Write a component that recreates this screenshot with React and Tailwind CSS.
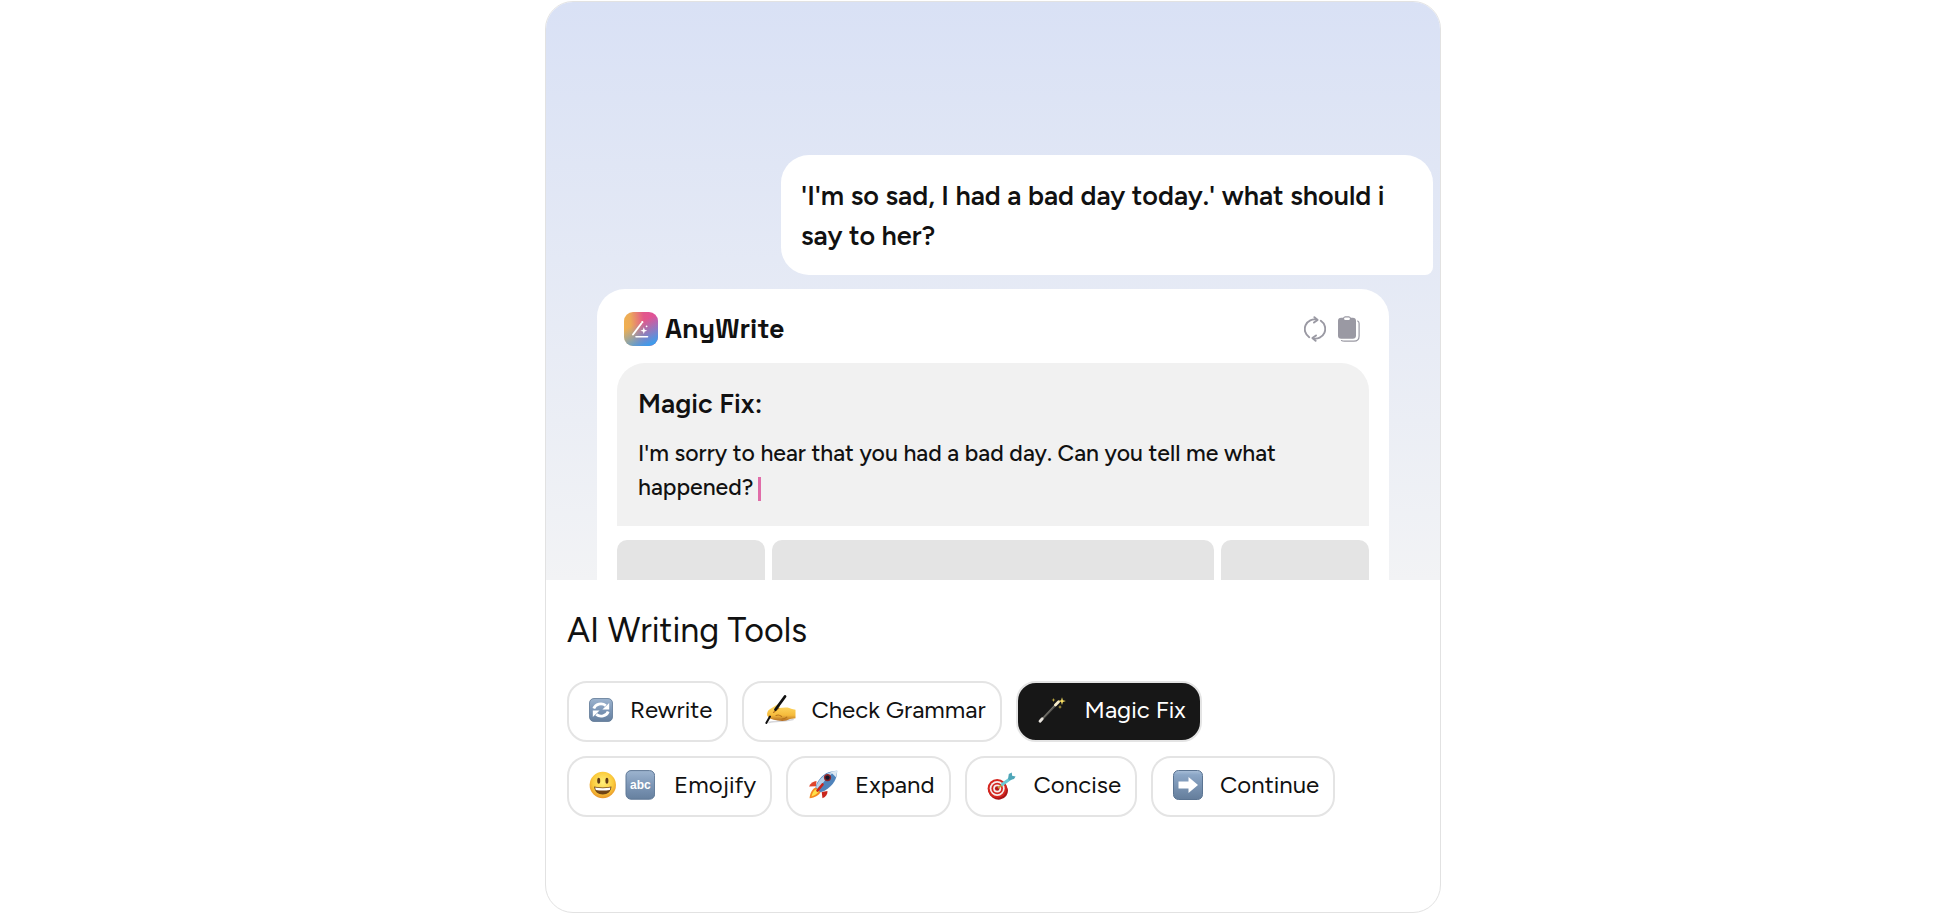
import React, { useState } from 'react';

const RewriteIcon = () => (
    <svg viewBox="0 0 24 24" className="w-6 h-6" aria-hidden="true">
        <defs>
            <linearGradient id="rewriteBg" x1="0" y1="0" x2="0" y2="1">
                <stop offset="0" stopColor="#9db4cf" />
                <stop offset="0.5" stopColor="#7d97b7" />
                <stop offset="1" stopColor="#66809f" />
            </linearGradient>
        </defs>
        <rect x="0.5" y="0.5" width="23" height="23" rx="4.5" fill="url(#rewriteBg)" stroke="#5f7896" strokeWidth="0.8" />
        <path d="M4.800 10.500A7.300 6.300 0 0 1 16.800 7.600" fill="none" stroke="#fff" strokeWidth="2.800" />
        <path d="M19.200 13.500A7.300 6.300 0 0 1 7.200 16.400" fill="none" stroke="#fff" strokeWidth="2.800" />
        <path d="M20.200 5v6.400h-6.800z" fill="#fff" />
        <path d="M3.800 19v-6.400h6.800z" fill="#fff" />
    </svg>
);

const WritingHandIcon = () => (
    <svg viewBox="0 0 32 32" className="w-8 h-8 shrink-0" aria-hidden="true">
        <defs>
            <linearGradient id="handSkin" x1="0" y1="0" x2="0" y2="1">
                <stop offset="0" stopColor="#ffdc66" />
                <stop offset="0.65" stopColor="#f5bb3c" />
                <stop offset="1" stopColor="#b06a22" />
            </linearGradient>
        </defs>
        <path d="M5 28.500c7-2 15-.5 24-3" stroke="#d6d6da" strokeWidth="1.600" fill="none" strokeLinecap="round" />
        <path d="M3.200 21.500c-.4-2.800.6-5 2.600-6.200L12.500 11c1.700-1 3.200-.4 3.500.6.300.9-.3 1.700-1.200 2.400l6.700-.6c2.500-.1 4.500.6 6.500 1.600l3.500.8v8.400l-5.500.9c-3.600 2-8 2.300-12 1.400-3.400-.4-8.700-1-10.800-5z" fill="url(#handSkin)" />
        <path d="M9.500 18.500l5.300-4.500M12 21.500c2-1 4-.4 5.500.9M18 25c2 0 3.600-.6 4.800-1.800" stroke="#b8741c" strokeWidth="1.100" fill="none" strokeLinecap="round" />
        <path d="M21 2.500L11.500 15.500" stroke="#111" strokeWidth="2.800" strokeLinecap="round" />
        <path d="M6 22.500L2.300 29" stroke="#111" strokeWidth="2" strokeLinecap="round" />
    </svg>
);

const WandIcon = () => (
    <svg viewBox="0 0 28 28" className="w-7 h-7" aria-hidden="true">
        <path d="M2.500 25L18 8.500" stroke="#55544f" strokeWidth="2.400" strokeLinecap="round" />
        <path d="M4 23L17 9" stroke="#85827a" strokeWidth="0.800" />
        <path d="M2 25.200L4.200 22.800" stroke="#e8e4de" strokeWidth="2.800" strokeLinecap="round" />
        <path d="M17.400 9L20.600 5.800" stroke="#f7ecc9" strokeWidth="2.800" strokeLinecap="round" />
        <path d="M24 1.200l.9 3 3 .9-3 .9-.9 3-.9-3-3-.9 3-.9z" fill="#f6dd63" />
        <path d="M15.500 2l.6 1.400 1.400.6-1.400.6-.6 1.400-.6-1.400-1.400-.6 1.400-.6z" fill="#b8a33f" />
        <path d="M22 9l.6 1.400 1.400.6-1.400.6-.6 1.400-.6-1.400-1.400-.6 1.400-.6z" fill="#b8a33f" />
    </svg>
);

const EmojifyIcon = () => (
    <svg viewBox="0 0 66 30" className="w-[66px] h-[30px]" aria-hidden="true">
        <defs>
            <radialGradient id="faceBg" cx="0.5" cy="0.4" r="0.6">
                <stop offset="0" stopColor="#fff07a" />
                <stop offset="0.65" stopColor="#fbcb3c" />
                <stop offset="1" stopColor="#e8962a" />
            </radialGradient>
            <linearGradient id="abcBg" x1="0" y1="0" x2="0" y2="1">
                <stop offset="0" stopColor="#9db4cf" />
                <stop offset="0.5" stopColor="#7d97b7" />
                <stop offset="1" stopColor="#66809f" />
            </linearGradient>
        </defs>
        <circle cx="13.800" cy="15" r="13.200" fill="url(#faceBg)" />
        <ellipse cx="9.700" cy="10.800" rx="1.500" ry="3" fill="#5f3a14" />
        <ellipse cx="17.900" cy="10.800" rx="1.500" ry="3" fill="#5f3a14" />
        <path d="M5.100 16.500c5.500 1.400 11.900 1.400 17.400 0-.4 5-3.800 8-8.700 8s-8.300-3-8.700-8z" fill="#6f4416" />
        <path d="M6.100 17.500c5 1.100 10.400 1.100 15.400 0l-.7 2.400c-4.300.9-9.700.9-14 0z" fill="#fff" />
        <rect x="37" y="0.600" width="28.600" height="28.600" rx="5" fill="url(#abcBg)" stroke="#5f7896" strokeWidth="1" />
        <text x="51.300" y="18.500" textAnchor="middle" fontSize="12" fontWeight="700" fill="#fff" fontFamily="Liberation Sans, sans-serif">abc</text>
    </svg>
);

const RocketIcon = () => (
    <svg viewBox="0 0 30 30" className="w-[30px] h-[30px]" aria-hidden="true">
        <path d="M8.500 11c-3 .2-6 2-7.500 5.600l7-.4z" fill="#e0452c" />
        <path d="M19.500 21c.2 3-1.500 5.800-5 7.200l-.8-6.200z" fill="#c9261d" />
        <path d="M8.500 17c-4 1.500-6.300 5.500-7 11.300C7 27.500 11.500 25.500 13 21z" fill="#f58a1f" />
        <path d="M8.500 19c-2.500 1-4.300 4-5 7.400 3.500-1 6.500-3 7.500-5.400z" fill="#ffe04a" />
        <path d="M29.200.8c-8 .2-14.700 2.700-20.200 12.200l-1.500 4.200 5 5 4.200-1.500C26 15 29 8.800 29.200.8z" fill="#4f83bb" />
        <path d="M27 1.200c-7.500 1.200-12.800 4.400-17.500 12l-1.500 4 2.200 2.200C14.500 12.500 20 6.500 27 1.200z" fill="#b9d0e8" />
        <path d="M29.200.8l-6.700.9 5.700 5.700z" fill="#dce8f3" />
        <path d="M14.500 14.500l-5 6" stroke="#c9261d" strokeWidth="2.600" strokeLinecap="round" />
        <circle cx="19.500" cy="7.600" r="3.600" fill="#8d2326" />
        <circle cx="19.500" cy="7.600" r="2.200" fill="#16182a" />
    </svg>
);

const TargetIcon = () => (
    <svg viewBox="0 0 30 30" className="w-[30px] h-[30px]" aria-hidden="true">
        <ellipse cx="11" cy="20" rx="10.200" ry="9.400" transform="rotate(35 11 20)" fill="#a91518" />
        <circle cx="10.200" cy="18.500" r="9.600" fill="#d5261f" />
        <circle cx="10.200" cy="18.500" r="7.500" fill="#f6eeee" />
        <circle cx="10.200" cy="18.500" r="5.800" fill="#d5261f" />
        <circle cx="10.200" cy="18.500" r="4" fill="#f6eeee" />
        <circle cx="10.200" cy="18.500" r="2.300" fill="#b5191b" />
        <path d="M11 18l5.500-4" stroke="#c79a3a" strokeWidth="1.800" />
        <path d="M15.500 14.200L23.500 8.500" stroke="#6cc9d6" strokeWidth="3.200" strokeLinecap="round" />
        <path d="M21 9l.8-5 3-1.500.3 3.300 3.500.7-1.600 2.500-4.600 1.200z" fill="#4fa6b8" />
    </svg>
);

const ArrowIcon = () => (
    <svg viewBox="0 0 30 30" className="w-[30px] h-[30px]" aria-hidden="true">
        <defs>
            <linearGradient id="arrowBg" x1="0" y1="0" x2="0" y2="1">
                <stop offset="0" stopColor="#a9bfd8" />
                <stop offset="0.15" stopColor="#8ba6c6" />
                <stop offset="1" stopColor="#647d9b" />
            </linearGradient>
        </defs>
        <rect x="0.500" y="0.500" width="29" height="29" rx="5" fill="url(#arrowBg)" stroke="#5b7492" strokeWidth="1" />
        <path d="M5.500 11.500h10v-4.500l9.500 8-9.500 8v-4.500h-10z" fill="#fff" />
    </svg>
);

const LogoIcon = () => (
    <svg viewBox="0 0 34 34" className="w-[34px] h-[34px]" aria-hidden="true">
        <defs>
            <linearGradient id="logoWarm" x1="0" y1="0.4" x2="1" y2="0.3">
                <stop offset="0" stopColor="#f0b050" />
                <stop offset="0.2" stopColor="#ecaa58" />
                <stop offset="0.6" stopColor="#e2588a" />
                <stop offset="1" stopColor="#e0509c" />
            </linearGradient>
            <linearGradient id="logoCool" x1="0.350" y1="0.350" x2="0.650" y2="1">
                <stop offset="0" stopColor="#4a9fe8" stopOpacity="0" />
                <stop offset="1" stopColor="#3f9bea" />
            </linearGradient>
        </defs>
        <rect width="34" height="34" rx="9" fill="url(#logoWarm)" />
        <rect width="34" height="34" rx="9" fill="url(#logoCool)" />
        <path d="M9 22.500L17.300 11.500" stroke="#fff" strokeWidth="1.900" strokeLinecap="round" />
        <circle cx="18.300" cy="10.200" r="1.100" fill="#fff" />
        <path d="M12 24.800H23.500" stroke="#fff" strokeWidth="1.600" strokeLinecap="round" />
        <path d="M19.800 15.300l.9 2.500 2.500.9-2.500.9-.9 2.500-.9-2.500-2.500-.9 2.500-.9z" fill="#fff" />
        <circle cx="22.600" cy="14.300" r="0.900" fill="#fff" />
    </svg>
);

const RefreshIcon = () => (
    <svg viewBox="0 0 22 26" className="w-[22px] h-[26px]" fill="none" stroke="#9a99a3" strokeWidth="1.900" strokeLinecap="round" strokeLinejoin="round" aria-hidden="true">
        <path d="M5.200 21.200A9.700 9.700 0 0 1 13 3.700" />
        <path d="M16.800 4.800A9.700 9.700 0 0 1 9 22.300" />
        <path d="M10.400 1.200l3.200 2.700-3.600 2.700" />
        <path d="M11.600 24.800l-3.200-2.700 3.600-2.700" />
    </svg>
);

const ClipboardIcon = () => (
    <svg viewBox="0 0 22 26" className="w-[22px] h-[26px]" aria-hidden="true">
        <path d="M3.200 1.800h2C5.700.8 6.600.3 7.800.3h2.400c1.200 0 2.100.5 2.600 1.500h2c2 0 3.200 1.100 3.200 3v15c0 1.900-1.200 3-3.200 3H3.200c-2 0-3.200-1.100-3.200-3v-15c0-1.900 1.200-3 3.200-3z" fill="#9a99a3" />
        <rect x="6.100" y="1.500" width="5.800" height="2.400" rx="1.200" fill="#fff" />
        <path d="M19.700 5c.9.400 1.400 1.200 1.400 2.500v12.500c0 3.400-1.900 5.200-5.200 5.200H6.500c-1.400 0-2.400-.2-3-.6" fill="none" stroke="#9a99a3" strokeWidth="1.200" strokeLinecap="round" />
    </svg>
);

const tools = [
    [
        { name: 'Rewrite', icon: <RewriteIcon />, slot: 'w-[25px]' },
        { name: 'Check Grammar', icon: <WritingHandIcon />, slot: 'w-[31px]' },
        { name: 'Magic Fix', icon: <WandIcon />, slot: 'w-[31px]' },
    ],
    [
        { name: 'Emojify', icon: <EmojifyIcon />, slot: 'w-[69px]' },
        { name: 'Expand', icon: <RocketIcon />, slot: 'w-[31px]' },
        { name: 'Concise', icon: <TargetIcon />, slot: 'w-[31px]' },
        { name: 'Continue', icon: <ArrowIcon />, slot: 'w-[31px]' },
    ],
];

const App = () => {
    const [active, setActive] = useState('Magic Fix');

    return (
        <div className="flex justify-center bg-white pt-px pl-[31px] font-['Figtree','Lato','Noto_Sans',sans-serif] text-[#111]">
            <main className="w-full max-w-4xl rounded-[28px] border border-[#e2e2e2] bg-white overflow-hidden">
                <section className="bg-linear-to-b from-[#d9e1f5] to-[#f2f3f5] pt-[153px]">
                    <div className="ml-auto mr-[7px] max-w-[652px] rounded-[28px] rounded-br-lg bg-white px-5 pt-[21px] pb-[19px]">
                        <p className="text-[27px] leading-10 font-semibold">
                            'I'm so sad, I had a bad day today.' what should i say to her?
                        </p>
                    </div>

                    <div className="mx-[51px] mt-[14px] rounded-t-[28px] bg-white px-5 pt-[23px]">
                        <div className="flex items-center justify-between pl-[7px] pr-[9px] mb-[17px]">
                            <div className="flex items-center gap-[7px]">
                                <LogoIcon />
                                <span className="font-['Space_Grotesk','Inter',sans-serif] text-[27px] leading-[34px] font-semibold">AnyWrite</span>
                            </div>
                            <div className="flex items-center gap-3">
                                <button type="button" aria-label="Regenerate">
                                    <RefreshIcon />
                                </button>
                                <button type="button" aria-label="Copy">
                                    <ClipboardIcon />
                                </button>
                            </div>
                        </div>

                        <div className="rounded-t-[28px] bg-[#f1f1f1] px-[21px] pt-[21px] pb-[22px]">
                            <h2 className="text-[27px] leading-10 font-semibold mb-3">Magic Fix:</h2>
                            <p className="text-[23px] leading-[34px] font-medium">
                                I'm sorry to hear that you had a bad day. Can you tell me what happened?
                                <span className="ml-[5px] inline-block h-6 w-[3px] bg-[#e06ca8] align-middle"></span>
                            </p>
                        </div>

                        <div className="mt-[14px] grid grid-cols-[1fr_3fr_1fr] gap-[7px]">
                            <div className="h-10 rounded-t-[10px] bg-[#e4e4e4]"></div>
                            <div className="h-10 rounded-t-[10px] bg-[#e4e4e4]"></div>
                            <div className="h-10 rounded-t-[10px] bg-[#e4e4e4]"></div>
                        </div>
                    </div>
                </section>

                <section className="px-[21px] pt-[31px] pb-[95px]">
                    <h1 className="text-[34px] leading-10 mb-[30px]">AI Writing Tools</h1>
                    <div className="flex flex-col gap-[14px]">
                        {tools.map((row, idx) => (
                            <div key={idx} className="flex flex-wrap gap-[14px]">
                                {row.map((tool) => (
                                    <button
                                        key={tool.name}
                                        type="button"
                                        onClick={() => setActive(tool.name)}
                                        className={`flex h-[61px] items-center rounded-[20px] border-2 border-[#e4e4e4] pl-5 pr-[14px] pb-[3px] text-2xl ${active === tool.name ? 'bg-[#171717] text-white' : 'bg-white'}`}
                                    >
                                        <span className={`${tool.slot} flex shrink-0`}>{tool.icon}</span>
                                        <span className="ml-4">{tool.name}</span>
                                    </button>
                                ))}
                            </div>
                        ))}
                    </div>
                </section>
            </main>
        </div>
    );
};

export default App;
